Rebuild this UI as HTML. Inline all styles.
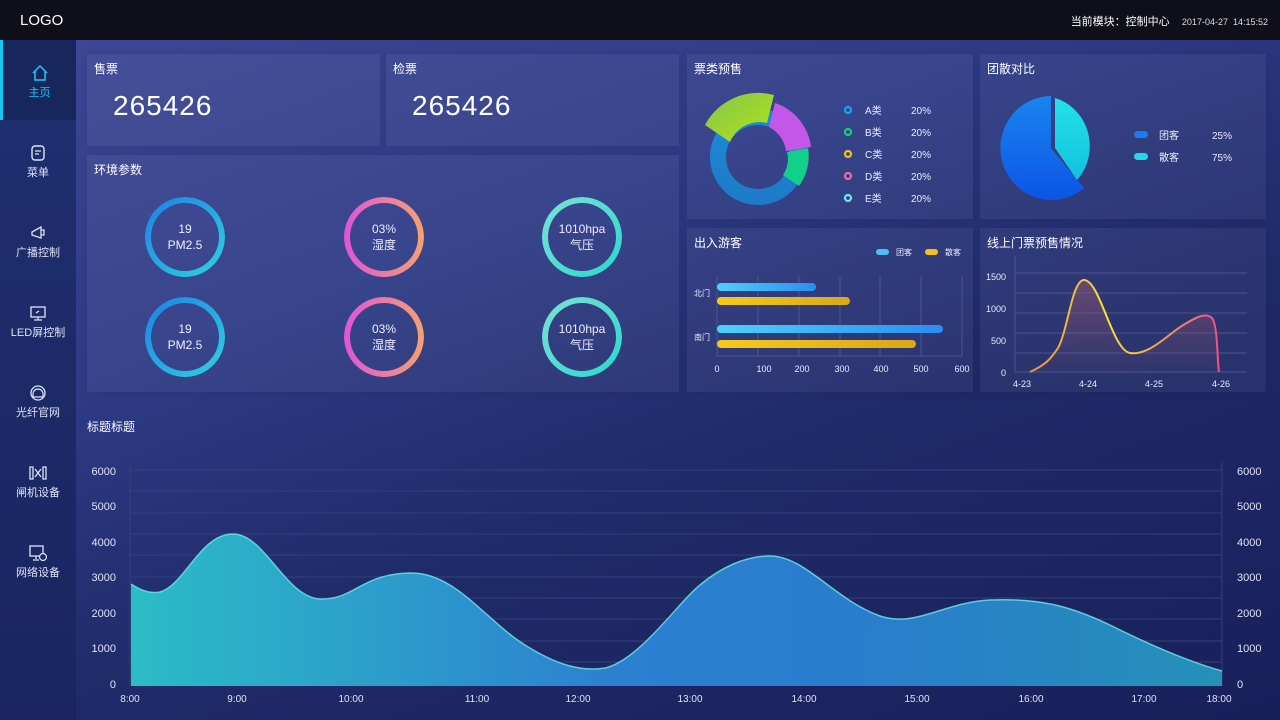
<!DOCTYPE html>
<html><head><meta charset="utf-8"><style>
*{margin:0;padding:0;box-sizing:border-box}
body{width:1280px;height:720px;overflow:hidden;font-family:"Liberation Sans","Noto Sans CJK SC",sans-serif;color:#fff;background:#1a2258;position:relative}
.top{position:absolute;left:0;top:0;width:1280px;height:40px;background:#0e0f19}
.logo{position:absolute;left:20px;top:12px;font-size:15px}
.tr{position:absolute;right:12px;top:13px;font-size:11px}
.main{position:absolute;left:76px;top:40px;width:1204px;height:680px;background:linear-gradient(160deg,#3c4795 0%,#2f3b86 30%,#1f2a68 60%,#18205a 100%)}
.side{position:absolute;left:0;top:40px;width:76px;height:680px;background:linear-gradient(180deg,#1f2f70,#1a2560)}
.nav{position:absolute;left:0;width:76px;height:80px;text-align:center;font-size:11px;color:#dfe3f5}
.nav.act{background:#17275e;color:#1ec8f5;border-left:3px solid #16c8f2}
.nav svg{display:block;margin:0 auto 2px}
.p{position:absolute;background:rgba(255,255,255,0.05);box-shadow:0 0 8px rgba(0,0,0,.1)}
.p h3{position:absolute;left:7px;top:6px;font-size:12px;font-weight:normal}
.big{position:absolute;font-size:28px;letter-spacing:1px}
.ring{position:absolute;width:80px;height:80px;border-radius:50%;text-align:center;padding-top:24px;font-size:12px;line-height:16px;color:#eef}
.ring::before{content:"";position:absolute;inset:0;border-radius:50%;padding:6px;background:var(--g);-webkit-mask:linear-gradient(#000 0 0) content-box,linear-gradient(#000 0 0);-webkit-mask-composite:xor;mask-composite:exclude}
.r1{--g:linear-gradient(135deg,#1e7fe5,#2fd3e0)}
.r2{--g:linear-gradient(90deg,#de55d8,#f4a26f)}
.r3{--g:linear-gradient(135deg,#7ee0d5,#27d8d0)}
svg text{font-family:"Liberation Sans","Noto Sans CJK SC",sans-serif}
</style></head><body>
<div class="top"><div class="logo">LOGO</div><div class="tr"><span style="font-size:11px">当前模块：控制中心</span>&nbsp;&nbsp;&nbsp;&nbsp;<span style="font-size:9px;color:#ddd">2017-04-27&nbsp;&nbsp;14:15:52</span></div></div>
<div class="side">
<div class="nav act" style="top:0;padding-top:24px"><svg width="18" height="18" viewBox="0 0 18 18"><path d="M2 9L9 2l7 7M4 7v9h10V7" fill="none" stroke="#1ec8f5" stroke-width="1.5"/></svg>主页</div>
<div class="nav" style="top:80px;padding-top:24px"><svg width="18" height="18" viewBox="0 0 18 18"><rect x="3" y="2" width="12" height="14" rx="3" fill="none" stroke="#dfe3f5" stroke-width="1.4"/><path d="M6 7h6M6 10h4" stroke="#dfe3f5" stroke-width="1.3"/></svg>菜单</div>
<div class="nav" style="top:160px;padding-top:24px"><svg width="18" height="18" viewBox="0 0 18 18"><path d="M3 8l9-5v11L3 11z M12 6h3v5h-3" fill="none" stroke="#dfe3f5" stroke-width="1.3"/></svg>广播控制</div>
<div class="nav" style="top:240px;padding-top:24px"><svg width="18" height="18" viewBox="0 0 18 18"><rect x="2" y="3" width="14" height="10" fill="none" stroke="#dfe3f5" stroke-width="1.3"/><path d="M9 13v3M5 16h8M7 9l3-2" stroke="#dfe3f5" stroke-width="1.3"/></svg>LED屏控制</div>
<div class="nav" style="top:320px;padding-top:24px"><svg width="18" height="18" viewBox="0 0 18 18"><circle cx="9" cy="9" r="7" fill="none" stroke="#dfe3f5" stroke-width="1.3"/><path d="M4 10a5 5 0 0110 0v3H4z" fill="none" stroke="#dfe3f5" stroke-width="1.2"/></svg>光纤官网</div>
<div class="nav" style="top:400px;padding-top:24px"><svg width="20" height="18" viewBox="0 0 20 18"><path d="M2 3h3v12H2zM15 3h3v12h-3zM7 5l6 8M13 5l-6 8" fill="none" stroke="#dfe3f5" stroke-width="1.3"/></svg>闸机设备</div>
<div class="nav" style="top:480px;padding-top:24px"><svg width="20" height="18" viewBox="0 0 20 18"><rect x="2" y="2" width="13" height="10" fill="none" stroke="#dfe3f5" stroke-width="1.3"/><path d="M8 12v3M5 16h6" stroke="#dfe3f5" stroke-width="1.3"/><circle cx="15" cy="13" r="3.5" fill="#1c2a66" stroke="#dfe3f5" stroke-width="1.2"/></svg>网络设备</div>
</div>
<div class="main"></div>

<div class="p" style="left:87px;top:54px;width:293px;height:92px"><h3>售票</h3><div class="big" style="left:26px;top:36px">265426</div></div>
<div class="p" style="left:386px;top:54px;width:293px;height:92px"><h3>检票</h3><div class="big" style="left:26px;top:36px">265426</div></div>
<div class="p" style="left:87px;top:155px;width:592px;height:237px"><h3>环境参数</h3>
<div class="ring r1" style="left:58px;top:42px">19<br>PM2.5</div>
<div class="ring r2" style="left:257px;top:42px">03%<br>湿度</div>
<div class="ring r3" style="left:455px;top:42px">1010hpa<br>气压</div>
<div class="ring r1" style="left:58px;top:142px">19<br>PM2.5</div>
<div class="ring r2" style="left:257px;top:142px">03%<br>湿度</div>
<div class="ring r3" style="left:455px;top:142px">1010hpa<br>气压</div>
</div>

<div class="p" style="left:687px;top:54px;width:286px;height:165px"><h3>票类预售</h3></div>
<div class="p" style="left:980px;top:54px;width:286px;height:165px"><h3>团散对比</h3></div>
<div class="p" style="left:687px;top:228px;width:286px;height:164px"><h3>出入游客</h3></div>
<div class="p" style="left:980px;top:228px;width:286px;height:164px"><h3>线上门票预售情况</h3></div>

<svg style="position:absolute;left:0;top:0" width="1280" height="720">
<defs>
<linearGradient id="gy" x1="0" y1="0" x2="1" y2="1"><stop offset="0" stop-color="#7fc64a"/><stop offset="1" stop-color="#b6e21c"/></linearGradient>
<linearGradient id="gb" x1="0" y1="0" x2="0" y2="1"><stop offset="0" stop-color="#1b8ad8"/><stop offset="1" stop-color="#1e7bc8"/></linearGradient>
<linearGradient id="pb" x1="0" y1="0" x2="0" y2="1"><stop offset="0" stop-color="#1a84ee"/><stop offset="1" stop-color="#0c55e6"/></linearGradient>
<linearGradient id="pc" x1="0" y1="0" x2="0" y2="1"><stop offset="0" stop-color="#22e2e8"/><stop offset="1" stop-color="#14c0e0"/></linearGradient>
<linearGradient id="bb" x1="0" x2="1"><stop offset="0" stop-color="#4fd0fa"/><stop offset="1" stop-color="#2a8ef0"/></linearGradient>
<linearGradient id="by" x1="0" x2="1"><stop offset="0" stop-color="#f8c91a"/><stop offset="1" stop-color="#d8a818"/></linearGradient>
<linearGradient id="ln" x1="0" x2="1"><stop offset="0" stop-color="#f08a3a"/><stop offset=".4" stop-color="#f5e33a"/><stop offset="1" stop-color="#f0508a"/></linearGradient>
<linearGradient id="lf" x1="0" y1="0" x2="0" y2="1"><stop offset="0" stop-color="#a05a70" stop-opacity=".5"/><stop offset="1" stop-color="#a05a70" stop-opacity=".05"/></linearGradient>
<linearGradient id="mf" x1="0" x2="1"><stop offset="0" stop-color="#2bbcc6"/><stop offset=".45" stop-color="#2d7fd0"/><stop offset=".65" stop-color="#2a7ccd"/><stop offset="1" stop-color="#2590b8"/></linearGradient>
</defs>
<!-- donut -->
<circle cx="758" cy="157" r="40" fill="none" stroke="url(#gb)" stroke-width="16"/>
<path d="M705 125 A 60 60 0 0 1 774 95 L 767 123 A 32 32 0 0 0 730 142 Z" fill="url(#gy)"/>
<path d="M775 103 A 53 53 0 0 1 811 147 L 786 151 A 32 32 0 0 0 769 127 Z" fill="#c557e8"/>
<path d="M808 148 A 50 50 0 0 1 799 186 L 783 175 A 28 28 0 0 0 787 152 Z" fill="#12d08a"/>
<g font-size="10" fill="#e8ebff">
<circle cx="848" cy="110" r="3" fill="none" stroke="#1aa7ec" stroke-width="2.2"/><text x="865" y="114">A类</text><text x="911" y="114">20%</text>
<circle cx="848" cy="132" r="3" fill="none" stroke="#14d07a" stroke-width="2.2"/><text x="865" y="136">B类</text><text x="911" y="136">20%</text>
<circle cx="848" cy="154" r="3" fill="none" stroke="#f5c218" stroke-width="2.2"/><text x="865" y="158">C类</text><text x="911" y="158">20%</text>
<circle cx="848" cy="176" r="3" fill="none" stroke="#f06aa8" stroke-width="2.2"/><text x="865" y="180">D类</text><text x="911" y="180">20%</text>
<circle cx="848" cy="198" r="3" fill="none" stroke="#6ee8f2" stroke-width="2.2"/><text x="865" y="202">E类</text><text x="911" y="202">20%</text>
</g>
<!-- pie -->
<path d="M1051 148 L1051 96 A51 52 0 1 0 1084 188 Z" fill="url(#pb)"/>
<path d="M1055 148 L1055 98 A48 50 0 0 1 1077 180 Z" fill="url(#pc)"/>
<rect x="1134" y="131" width="14" height="7" rx="3.5" fill="#1a7cee"/>
<rect x="1134" y="153" width="14" height="7" rx="3.5" fill="#22d8ee"/>
<g font-size="10" fill="#e8ebff"><text x="1159" y="139">团客</text><text x="1212" y="139">25%</text><text x="1159" y="161">散客</text><text x="1212" y="161">75%</text></g>
<!-- bars -->
<rect x="876" y="249" width="13" height="6" rx="3" fill="#4cc0f5"/><text x="896" y="255" font-size="8" fill="#e8ebff">团客</text>
<rect x="925" y="249" width="13" height="6" rx="3" fill="#f5c21c"/><text x="945" y="255" font-size="8" fill="#e8ebff">散客</text>
<g stroke="#4a5590" stroke-width="1"><line x1="717" y1="276" x2="717" y2="356"/><line x1="758" y1="276" x2="758" y2="356"/><line x1="799" y1="276" x2="799" y2="356"/><line x1="840" y1="276" x2="840" y2="356"/><line x1="880" y1="276" x2="880" y2="356"/><line x1="921" y1="276" x2="921" y2="356"/><line x1="962" y1="276" x2="962" y2="356"/><line x1="717" y1="356" x2="962" y2="356"/></g>
<rect x="717" y="283" width="99" height="8" rx="4" fill="url(#bb)"/>
<rect x="717" y="297" width="133" height="8" rx="4" fill="url(#by)"/>
<rect x="717" y="325" width="226" height="8" rx="4" fill="url(#bb)"/>
<rect x="717" y="340" width="199" height="8" rx="4" fill="url(#by)"/>
<g font-size="8" fill="#e8ebff"><text x="694" y="296">北门</text><text x="694" y="340">南门</text></g>
<g font-size="9" fill="#e8ebff" text-anchor="middle"><text x="717" y="372">0</text><text x="764" y="372">100</text><text x="802" y="372">200</text><text x="842" y="372">300</text><text x="881" y="372">400</text><text x="921" y="372">500</text><text x="962" y="372">600</text></g>
<!-- line chart -->
<g stroke="#4a5590" stroke-width="1"><line x1="1015" y1="273" x2="1247" y2="273"/><line x1="1015" y1="293" x2="1247" y2="293"/><line x1="1015" y1="313" x2="1247" y2="313"/><line x1="1015" y1="333" x2="1247" y2="333"/><line x1="1015" y1="353" x2="1247" y2="353"/><line x1="1015" y1="372" x2="1247" y2="372"/><line x1="1015" y1="256" x2="1015" y2="372"/></g>
<path d="M1030 372 C1045 365 1050 360 1058 348 C1068 330 1072 280 1084 280 C1100 280 1112 350 1130 353 C1150 356 1170 332 1185 324 C1195 318 1205 312 1212 318 C1218 326 1217 360 1219 372 Z" fill="url(#lf)"/>
<path d="M1030 372 C1045 365 1050 360 1058 348 C1068 330 1072 280 1084 280 C1100 280 1112 350 1130 353 C1150 356 1170 332 1185 324 C1195 318 1205 312 1212 318 C1218 326 1217 360 1219 372" fill="none" stroke="url(#ln)" stroke-width="2"/>
<g font-size="9" fill="#e8ebff" text-anchor="end"><text x="1006" y="280">1500</text><text x="1006" y="312">1000</text><text x="1006" y="344">500</text><text x="1006" y="376">0</text></g>
<g font-size="9" fill="#e8ebff" text-anchor="middle"><text x="1022" y="387">4-23</text><text x="1088" y="387">4-24</text><text x="1154" y="387">4-25</text><text x="1221" y="387">4-26</text></g>
<!-- main chart -->
<text x="87" y="431" font-size="12" fill="#fff">标题标题</text>
<g stroke="#34407a" stroke-width="1"><line x1="130" y1="470" x2="1222" y2="470"/><line x1="130" y1="491" x2="1222" y2="491"/><line x1="130" y1="513" x2="1222" y2="513"/><line x1="130" y1="534" x2="1222" y2="534"/><line x1="130" y1="555" x2="1222" y2="555"/><line x1="130" y1="577" x2="1222" y2="577"/><line x1="130" y1="598" x2="1222" y2="598"/><line x1="130" y1="619" x2="1222" y2="619"/><line x1="130" y1="641" x2="1222" y2="641"/><line x1="130" y1="662" x2="1222" y2="662"/><line x1="130" y1="462" x2="130" y2="686"/><line x1="1222" y1="462" x2="1222" y2="686"/></g>
<path d="M131 584 C140 590 150 594 160 592 C185 585 200 534 233 534 C265 534 285 597 320 599 C355 600 360 574 410 573 C455 572 485 620 525 645 C555 664 580 672 605 668 C640 660 680 600 700 585 C720 568 745 556 770 556 C805 556 835 600 880 616 C915 628 945 602 990 600 C1040 598 1070 606 1110 625 C1150 645 1190 662 1222 671 L1222 686 L131 686 Z" fill="url(#mf)"/>
<path d="M131 584 C140 590 150 594 160 592 C185 585 200 534 233 534 C265 534 285 597 320 599 C355 600 360 574 410 573 C455 572 485 620 525 645 C555 664 580 672 605 668 C640 660 680 600 700 585 C720 568 745 556 770 556 C805 556 835 600 880 616 C915 628 945 602 990 600 C1040 598 1070 606 1110 625 C1150 645 1190 662 1222 671" fill="none" stroke="#6fe6ee" stroke-width="1.5" opacity=".8"/>
<g font-size="11" fill="#dfe3f5" text-anchor="end"><text x="116" y="475">6000</text><text x="116" y="510">5000</text><text x="116" y="546">4000</text><text x="116" y="581">3000</text><text x="116" y="617">2000</text><text x="116" y="652">1000</text><text x="116" y="688">0</text></g>
<g font-size="11" fill="#dfe3f5"><text x="1237" y="475">6000</text><text x="1237" y="510">5000</text><text x="1237" y="546">4000</text><text x="1237" y="581">3000</text><text x="1237" y="617">2000</text><text x="1237" y="652">1000</text><text x="1237" y="688">0</text></g>
<g font-size="10" fill="#dfe3f5" text-anchor="middle"><text x="130" y="702">8:00</text><text x="237" y="702">9:00</text><text x="351" y="702">10:00</text><text x="477" y="702">11:00</text><text x="578" y="702">12:00</text><text x="690" y="702">13:00</text><text x="804" y="702">14:00</text><text x="917" y="702">15:00</text><text x="1031" y="702">16:00</text><text x="1144" y="702">17:00</text><text x="1219" y="702">18:00</text></g>
</svg>
</body></html>
